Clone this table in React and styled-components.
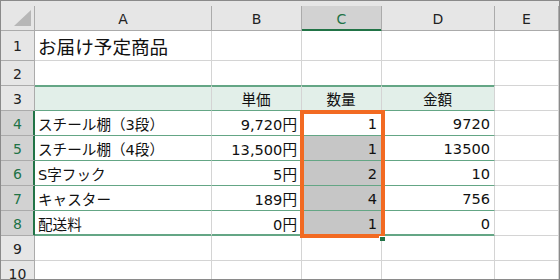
import styled, { createGlobalStyle } from 'styled-components'

const GlobalStyle = createGlobalStyle`
  body {
    margin: 0;
    background: #fff;
    font-family: "DejaVu Sans", "Noto Sans CJK JP", sans-serif;
  }
`

const GREEN = '#217346'
const TABLE = '#64a685'
const GRID = '#d4d4d4'
const HEAD_LINE = '#ababab'

const Frame = styled.div`
  position: relative;
  width: 560px;
  height: 280px;
  box-sizing: border-box;
  border: 1px solid #8a8a8a;
  padding-top: 5px;
  background: #e6e6e6;
  overflow: hidden;
`

const Sheet = styled.div`
  display: grid;
  grid-template-columns: 34px 177px 90px 80px 113px 64px;
  grid-template-rows: 25px 30px repeat(9, 25px);
  background: #fff;
`

const Corner = styled.div`
  position: relative;
  background: #e6e6e6;
  border-right: 1px solid ${HEAD_LINE};
  border-bottom: 1px solid ${HEAD_LINE};
  &::after {
    content: '';
    position: absolute;
    left: 13px;
    top: 4px;
    width: 17px;
    height: 16px;
    background: #b7b7b7;
    clip-path: polygon(100% 0, 100% 100%, 0 100%);
  }
`

const ColHead = styled.div`
  display: flex;
  align-items: center;
  justify-content: center;
  box-sizing: border-box;
  background: ${(p) => (p.$sel ? '#d2d2d2' : '#e6e6e6')};
  color: ${(p) => (p.$sel ? GREEN : '#222')};
  border-right: 1px solid ${HEAD_LINE};
  border-bottom: 1px solid ${(p) => (p.$sel ? GREEN : HEAD_LINE)};
  box-shadow: ${(p) => (p.$sel ? `inset 0 -1px 0 ${GREEN}` : 'none')};
  font-size: 14px;
  padding-top: 1px;
`

const RowHead = styled.div`
  display: flex;
  align-items: center;
  justify-content: center;
  box-sizing: border-box;
  background: ${(p) => (p.$sel ? '#d2d2d2' : '#e6e6e6')};
  color: ${(p) => (p.$sel ? GREEN : '#222')};
  border-right: 1px solid ${(p) => (p.$sel ? GREEN : HEAD_LINE)};
  border-bottom: 1px solid ${HEAD_LINE};
  box-shadow: ${(p) => (p.$sel ? `inset -1px 0 0 ${GREEN}` : 'none')};
  font-size: 14px;
  padding-top: 1px;
`

const Cell = styled.div`
  display: flex;
  align-items: center;
  justify-content: ${(p) => (p.$align === 'right' ? 'flex-end' : p.$align === 'center' ? 'center' : 'flex-start')};
  box-sizing: border-box;
  padding: ${(p) => (p.$title ? '0 4px 1px 3px' : '1px 4px 0 3px')};
  white-space: nowrap;
  color: #111;
  font-size: ${(p) => (p.$title ? '18.6px' : '14.6px')};
  background: ${(p) => (p.$head ? '#e2efe9' : p.$shade ? '#c6c6c6' : '#fff')};
  border-right: 1px solid ${GRID};
  border-bottom: 1px solid ${(p) => (p.$line ? TABLE : GRID)};
  box-shadow: ${(p) =>
    p.$head ? `inset 0 1px 0 ${TABLE}` : p.$last ? `inset 0 -1px 0 ${TABLE}` : 'none'};
`

const Selection = styled.div`
  position: absolute;
  left: 299px;
  top: 109px;
  width: 85px;
  height: 128px;
  box-sizing: border-box;
  border: 4px solid #f26a22;
  pointer-events: none;
`

const FillHandle = styled.div`
  position: absolute;
  left: 378px;
  top: 235px;
  width: 5px;
  height: 4px;
  background: ${GREEN};
  border-left: 1px solid #fff;
  border-top: 1px solid #fff;
`

const cols = ['A', 'B', 'C', 'D', 'E']

const rows = [
  { n: 1, cells: ['お届け予定商品', '', '', '', ''], title: true },
  { n: 2, cells: ['', '', '', '', ''] },
  { n: 3, cells: ['', '単価', '数量', '金額', ''], head: true },
  { n: 4, cells: ['スチール棚（3段）', '9,720円', '1', '9720', ''] },
  { n: 5, cells: ['スチール棚（4段）', '13,500円', '1', '13500', ''] },
  { n: 6, cells: ['S字フック', '5円', '2', '10', ''] },
  { n: 7, cells: ['キャスター', '189円', '4', '756', ''] },
  { n: 8, cells: ['配送料', '0円', '1', '0', ''] },
  { n: 9, cells: ['', '', '', '', ''] },
  { n: 10, cells: ['', '', '', '', ''] },
]

const App = () => {
  return (
    <>
      <GlobalStyle />
      <Frame>
        <Sheet>
          <Corner />
          {cols.map((c) => (
            <ColHead key={c} $sel={c === 'C'}>
              {c}
            </ColHead>
          ))}
          {rows.map((row) => {
            const inData = row.n >= 4 && row.n <= 8
            return [
              <RowHead key={`h${row.n}`} $sel={inData}>
                {row.n}
              </RowHead>,
              ...row.cells.map((text, i) => {
                const inTable = i < 4 && row.n >= 2 && row.n <= 8
                return (
                  <Cell
                    key={`${row.n}-${i}`}
                    $title={row.title}
                    $head={row.head && i < 4}
                    $line={inTable}
                    $last={row.n === 8 && i < 4}
                    $shade={i === 2 && row.n >= 5 && row.n <= 8}
                    $align={row.head ? 'center' : i > 0 && i < 4 ? 'right' : 'left'}
                  >
                    {text}
                  </Cell>
                )
              }),
            ]
          })}
        </Sheet>
        <Selection />
        <FillHandle />
      </Frame>
    </>
  )
}

export default App
